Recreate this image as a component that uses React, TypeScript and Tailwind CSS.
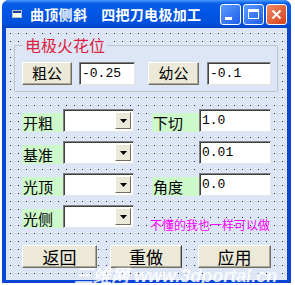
import React from "react";

const cjk = "font-['SimSun','Noto_Sans_CJK_SC',sans-serif]";

function Btn({ label, className }: { label: string; className: string }) {
  return (
    <div
      className={`flex items-center justify-center bg-[#ece9d8] border border-t-white border-l-white border-r-[#716f64] border-b-[#716f64] shadow-[inset_-1px_-1px_0_#aca899] text-black ${className}`}
    >
      {label}
    </div>
  );
}

function Field({ value, className }: { value: string; className: string }) {
  return (
    <div
      className={`flex items-center bg-white border border-t-[#808080] border-l-[#808080] border-r-[#e6e6e6] border-b-[#e6e6e6] shadow-[inset_1px_1px_0_#404040] pl-[2px] font-['Liberation_Mono',monospace] text-[13px] text-black ${className}`}
    >
      {value}
    </div>
  );
}

function Combo() {
  return (
    <div className="flex w-[71px] h-[23px] bg-white border border-t-[#808080] border-l-[#808080] border-r-[#e6e6e6] border-b-[#e6e6e6] shadow-[inset_1px_1px_0_#404040] p-[2px] justify-end">
      <div className="w-[16px] h-full flex items-center justify-center bg-[#ece9d8] border border-t-white border-l-white border-r-[#716f64] border-b-[#716f64]">
        <svg width="7" height="4" viewBox="0 0 7 4">
          <polygon points="0,0 7,0 3.5,4" fill="#000" />
        </svg>
      </div>
    </div>
  );
}

function Label({ text }: { text: string }) {
  return (
    <div className={`h-[19px] px-[1px] flex items-center bg-[#cdf8ca] text-[15px] leading-none text-black ${cjk}`}>
      {text}
    </div>
  );
}

export default function App() {
  return (
    <div className={`w-[295px] h-[285px] bg-white relative overflow-hidden ${cjk}`}>
      <div className="ml-[2px] w-[289px] h-[283px] bg-[#0b45d6] rounded-t-[7px] flex flex-col px-[4px] pb-[3px]">
        {/* title bar */}
        <div className="h-[28px] -mx-[4px] rounded-t-[7px] bg-[linear-gradient(to_bottom,#4a9bff_0%,#0a5fe8_12%,#0055e5_45%,#0050dc_85%,#0042c4_100%)] flex items-center pl-[10px] pr-[4px]">
          <svg width="10" height="8" viewBox="0 0 10 8" className="mr-[8px]">
            <rect x="0.5" y="0.5" width="9" height="7" fill="#fff" stroke="#c0c0c0" />
            <rect x="1" y="1" width="8" height="2" fill="#1d3fa0" />
          </svg>
          <span className="text-white font-bold text-[14px] leading-none tracking-[0.3px]">曲顶侧斜</span>
          <span className="ml-[14px] text-white font-bold text-[14px] leading-none tracking-[0.3px]">四把刀电极加工</span>
          <div className="ml-auto flex gap-[2px]">
            <div className="w-[21px] h-[21px] rounded-[3px] border border-white bg-[linear-gradient(135deg,#5c9cff,#1d5ee8)] flex items-end justify-start pl-[4px] pb-[4px]">
              <div className="w-[7px] h-[3px] bg-white" />
            </div>
            <div className="w-[21px] h-[21px] rounded-[3px] border border-white bg-[linear-gradient(135deg,#5c9cff,#1d5ee8)] flex items-center justify-center">
              <div className="w-[11px] h-[10px] border border-white border-t-[3px]" />
            </div>
            <div className="w-[21px] h-[21px] rounded-[3px] border border-white bg-[linear-gradient(135deg,#f08a64,#d5401a)] flex items-center justify-center">
              <svg width="11" height="11" viewBox="0 0 11 11">
                <path d="M1.5 1.5 L9.5 9.5 M9.5 1.5 L1.5 9.5" stroke="#fff" strokeWidth="2" />
              </svg>
            </div>
          </div>
        </div>

        {/* client area */}
        <div className="flex-1 bg-[#dce6f6] bg-[conic-gradient(at_1px_1px,transparent_75%,#222_0)] bg-[length:8px_8px] bg-[position:4px_5px] flex flex-col pl-[8px] pt-[9px]">
          {/* group frame */}
          <div className="w-[264px] flex flex-col">
            <div className="flex h-[16px]">
              <div className="w-[9px] h-[8px] self-end border-t border-l border-[#c3c3c3] rounded-tl-[2px] bg-[#dce6f6]" />
              <div className="px-[2px] h-[16px] flex items-center text-[16px] leading-none text-[#dc1f3c] bg-[#dce6f6]">电极火花位</div>
              <div className="flex-1 h-[8px] self-end border-t border-r border-[#c3c3c3] rounded-tr-[2px] bg-[#dce6f6]" />
            </div>
            <div className="h-[39px] border border-t-0 border-[#c3c3c3] rounded-b-[2px] bg-[#dce6f6] pl-[7px] pt-[9px] flex items-start">
              <Btn label="粗公" className="w-[50px] h-[23px] text-[15px]" />
              <Field value="-0.25" className="ml-[7px] w-[56px] h-[23px]" />
              <Btn label="幼公" className="ml-[13px] w-[51px] h-[23px] text-[15px]" />
              <Field value="-0.1" className="ml-[8px] w-[64px] h-[23px]" />
            </div>
          </div>

          <div className="mt-[17px] ml-[8px] flex flex-col gap-[9px]">
            <div className="flex items-end h-[23px]">
              <div className="w-[41px]"><Label text="开粗" /></div>
              <Combo />
              <div className="ml-[18px] w-[47px]"><Label text="下切" /></div>
              <Field value="1.0" className="w-[72px] h-[23px]" />
            </div>
            <div className="flex items-end h-[23px]">
              <div className="w-[41px]"><Label text="基准" /></div>
              <Combo />
              <div className="ml-[18px] w-[47px]" />
              <Field value="0.01" className="w-[72px] h-[23px]" />
            </div>
            <div className="flex items-end h-[23px]">
              <div className="w-[41px]"><Label text="光顶" /></div>
              <Combo />
              <div className="ml-[18px] w-[47px]"><Label text="角度" /></div>
              <Field value="0.0" className="w-[72px] h-[23px]" />
            </div>
            <div className="flex items-end h-[23px]">
              <div className="w-[41px]"><Label text="光侧" /></div>
              <Combo />
              <div className="ml-[16px] text-[12px] leading-none text-[#ff00ff] mb-[-3px] whitespace-nowrap">不懂的我也一样可以做</div>
            </div>
          </div>

          <div className="mt-[17px] ml-[8px] flex">
            <Btn label="返回" className="w-[75px] h-[23px] text-[17px]" />
            <Btn label="重做" className="ml-[13px] w-[72px] h-[23px] text-[17px] border-r-[#404040]" />
            <Btn label="应用" className="ml-[16px] w-[73px] h-[23px] text-[17px]" />
          </div>
        </div>
      </div>

      <div className="absolute left-[75px] top-[267px] text-white font-bold italic text-[18px] leading-none font-['Liberation_Sans',sans-serif] whitespace-nowrap opacity-85">
        三维网 www.3dportal.cn
      </div>
    </div>
  );
}
